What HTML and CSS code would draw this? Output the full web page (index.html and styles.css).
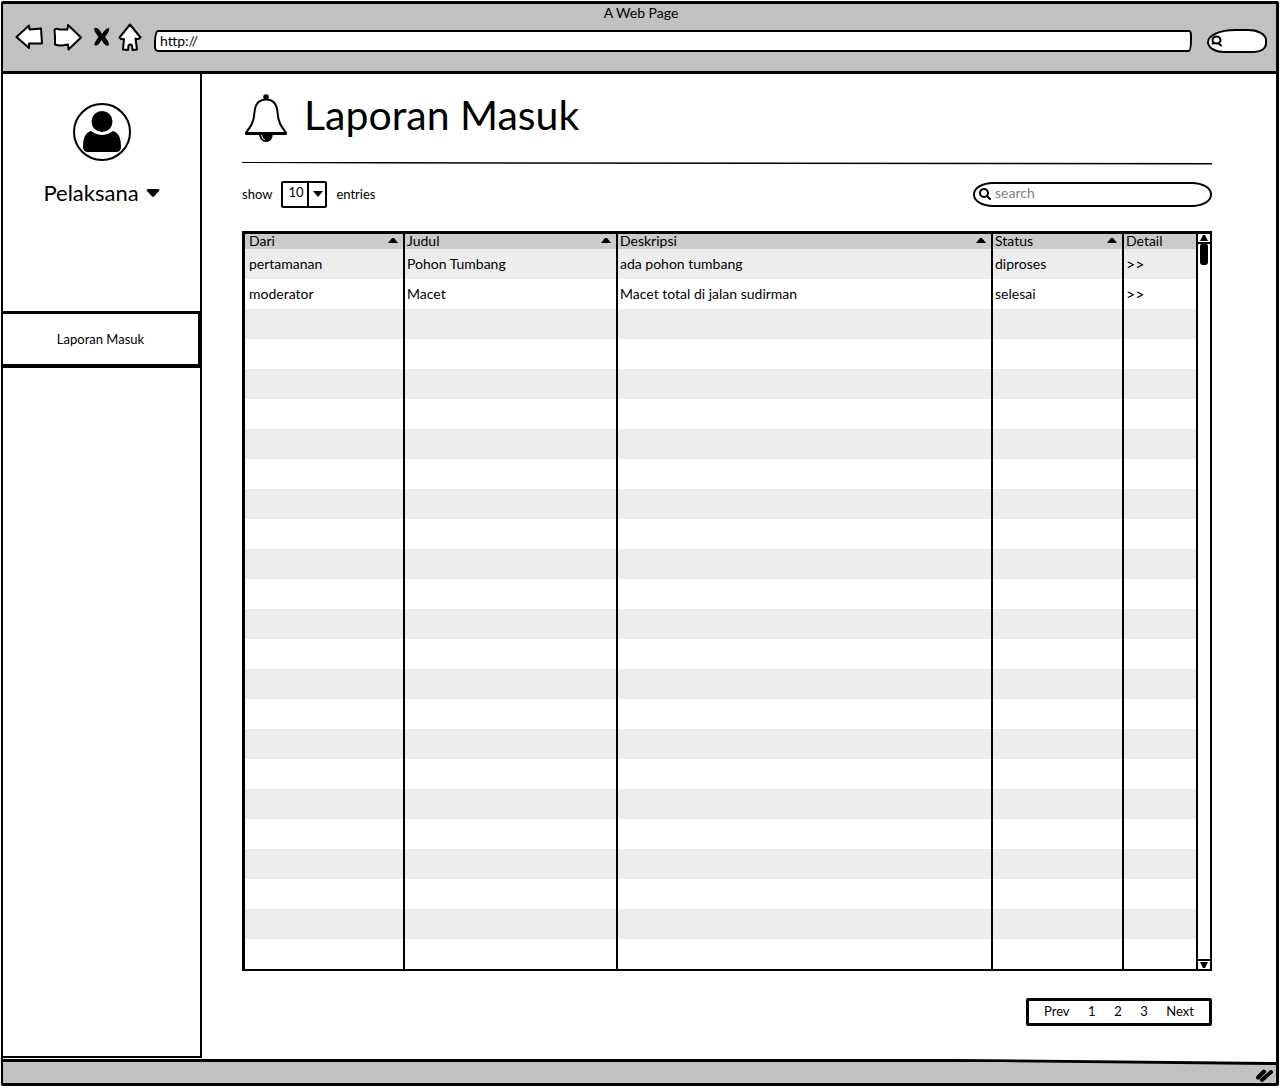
FILE: index.html
```html
<!DOCTYPE html>
<html lang="id">
<head>
<meta charset="utf-8">
<meta name="viewport" content="width=device-width, initial-scale=1">
<title>A Web Page</title>
<link rel="stylesheet" href="styles.css">
</head>
<body>
<div class="browser">
  <header class="toolbar">
    <div class="toolbar-title">A Web Page</div>
    <div class="toolbar-row">
      <div class="nav-icons">
        <button class="icon-button" type="button" aria-label="Back"><svg width="28" height="28" viewBox="0 0 28 28"><path class="outline" d="M1.500 14 L14 2.500 L14.500 6.500 L26 5.500 L27 20.500 L14 20.500 L14 25 Z"/></svg></button>
        <button class="icon-button" type="button" aria-label="Forward"><svg width="30" height="28" viewBox="0 0 30 28"><path class="outline" d="M2.500 7 Q3 5 8 6.500 L15.500 6.500 L16 2 L29 14.500 L16.500 26.500 L16 21.500 Q7 23.500 3 21.500 L3 14 Z"/></svg></button>
        <button class="icon-button icon-stop" type="button" aria-label="Stop"><svg width="18" height="20" viewBox="0 0 18 20"><path d="M1.500 1 Q5-.5 9 7 Q13 .5 16 1.200 Q17.500 3 12 10 Q17 16 15.500 18.500 Q12.500 20 8.500 13 Q5 19.500 2 18.500 Q0 17.500 5.500 10 Q0 3 1.500 1Z"/></svg></button>
        <button class="icon-button" type="button" aria-label="Home"><svg width="24" height="28" viewBox="0 0 24 28"><path class="outline" d="M12 1.500 L22.500 14.500 Q20 17 17.500 15.500 L19 26.500 L14.500 27 L14 22.500 Q12 20.500 10.500 22.500 L10 27 L5 26.500 L6 16 Q3 17 1.500 14.500 Z"/></svg></button>
      </div>
      <input class="address" type="text" value="http://" aria-label="Address">
      <div class="web-search">
        <svg class="web-search-icon" width="12" height="12" viewBox="0 0 12 12"><path class="outline" d="M1.500 8.500 L4 8 M7 8 L10 10.500"/><ellipse class="outline" cx="5.500" cy="5" rx="4" ry="3.500"/></svg>
        <input class="web-search-input" type="search" aria-label="Web search">
      </div>
    </div>
  </header>

  <div class="page">
    <nav class="sidebar">
      <div class="profile">
        <svg class="avatar" width="58" height="58" viewBox="0 0 58 58"><circle class="avatar-ring" cx="29" cy="29" r="28"/><circle cx="29" cy="18.500" r="10.500"/><path d="M18 28 Q29 36 40 28 Q48 30 48 44 Q48 49 43 49 H15 Q10 49 10 44 Q10 30 18 28Z"/></svg>
        <button class="profile-menu" type="button">Pelaksana <svg width="14" height="8" viewBox="0 0 14 8"><path d="M1.500 0 H12.500 Q14 .5 13 2 L8 7.500 Q7 8.300 6 7.500 L1 2 Q0 .5 1.500 0Z"/></svg></button>
      </div>
      <a class="sidebar-link" href="#laporan">Laporan Masuk</a>
    </nav>

    <main class="content" id="laporan">
      <div class="heading">
        <svg class="bell" width="44" height="48" viewBox="0 0 44 48"><circle cx="22" cy="3" r="2.800"/><path class="bell-body" d="M22 5.500 C13 5.500 11 12 10.500 18 C10 28 7 32 2.500 38 Q1 40 3 40 H41 Q43 40 41.500 38 C37 32 34 28 33.500 18 C33 12 31 5.500 22 5.500Z"/><path d="M1 38 H43 V40 Q42 41 41 41 H3 Q1 41 1 38Z"/><path d="M15 40 H29 Q28 48 22 48 Q16 48 15 40Z"/><path class="bell-shine" d="M17.500 41 Q18 45 21 46"/></svg>
        <h1 class="title">Laporan Masuk</h1>
      </div>
      <svg class="rule" viewBox="0 0 970 4" preserveAspectRatio="none"><path d="M0 1 L130 1 L970 2 L970 3.500 L140 2.500 L0 2Z"/></svg>

      <div class="controls">
        <div class="entries">
          <label for="count">show</label>
          <div class="select-box">
            <select class="select" id="count" aria-label="show entries"><option>10</option><option>25</option><option>50</option></select>
            <span class="select-arrow"><svg width="10" height="6" viewBox="0 0 10 6"><path d="M0 0 H10 L5 6Z"/></svg></span>
          </div>
          <span>entries</span>
        </div>
        <div class="search">
          <svg class="search-icon" width="12" height="12" viewBox="0 0 12 12"><circle class="outline" cx="5" cy="5" r="4"/><path class="outline" d="M8 8 L11 11"/></svg>
          <input class="search-input" type="search" placeholder="search" aria-label="search">
        </div>
      </div>

      <div class="grid-box">
        <table class="reports">
          <colgroup><col class="col-from"><col class="col-title"><col><col class="col-status"><col class="col-detail"></colgroup>
          <thead>
            <tr><th class="sortable">Dari</th><th class="sortable">Judul</th><th class="sortable">Deskripsi</th><th class="sortable">Status</th><th>Detail</th></tr>
          </thead>
          <tbody>
            <tr><td>pertamanan</td><td>Pohon Tumbang</td><td>ada pohon tumbang</td><td>diproses</td><td><a class="detail-link" href="#detail-1">&gt;&gt;</a></td></tr>
            <tr><td>moderator</td><td>Macet</td><td>Macet total di jalan sudirman</td><td>selesai</td><td><a class="detail-link" href="#detail-2">&gt;&gt;</a></td></tr>
            <tr><td></td><td></td><td></td><td></td><td></td></tr>
            <tr><td></td><td></td><td></td><td></td><td></td></tr>
            <tr><td></td><td></td><td></td><td></td><td></td></tr>
            <tr><td></td><td></td><td></td><td></td><td></td></tr>
            <tr><td></td><td></td><td></td><td></td><td></td></tr>
            <tr><td></td><td></td><td></td><td></td><td></td></tr>
            <tr><td></td><td></td><td></td><td></td><td></td></tr>
            <tr><td></td><td></td><td></td><td></td><td></td></tr>
            <tr><td></td><td></td><td></td><td></td><td></td></tr>
            <tr><td></td><td></td><td></td><td></td><td></td></tr>
            <tr><td></td><td></td><td></td><td></td><td></td></tr>
            <tr><td></td><td></td><td></td><td></td><td></td></tr>
            <tr><td></td><td></td><td></td><td></td><td></td></tr>
            <tr><td></td><td></td><td></td><td></td><td></td></tr>
            <tr><td></td><td></td><td></td><td></td><td></td></tr>
            <tr><td></td><td></td><td></td><td></td><td></td></tr>
            <tr><td></td><td></td><td></td><td></td><td></td></tr>
            <tr><td></td><td></td><td></td><td></td><td></td></tr>
            <tr><td></td><td></td><td></td><td></td><td></td></tr>
            <tr><td></td><td></td><td></td><td></td><td></td></tr>
            <tr><td></td><td></td><td></td><td></td><td></td></tr>
            <tr><td></td><td></td><td></td><td></td><td></td></tr>
          </tbody>
        </table>
        <div class="scrollbar">
          <button class="scroll-button scroll-up" type="button" aria-label="Scroll up"><svg width="8" height="6" viewBox="0 0 8 6"><path d="M0 6 H8 L5 0 H3Z"/></svg></button>
          <div class="scroll-thumb"></div>
          <button class="scroll-button scroll-down" type="button" aria-label="Scroll down"><svg width="8" height="6" viewBox="0 0 8 6"><path d="M0 0 H8 L5 6 H3Z"/></svg></button>
        </div>
      </div>

      <nav class="pager" aria-label="Pages">
        <a href="#prev">Prev</a><a href="#1">1</a><a href="#2">2</a><a href="#3">3</a><a href="#next">Next</a>
      </nav>
    </main>
  </div>

  <footer class="statusbar">
    <svg class="status-edge" viewBox="0 0 1273 6" preserveAspectRatio="none"><path class="status-fill" d="M0 1 H1000 L1273 4 V6 H0Z"/><path d="M0 0 H950 L1273 3 V6 L1000 3 H0Z"/></svg>
    <svg class="grip" width="18" height="15" viewBox="0 0 18 15"><path d="M2 9.500 L8 3.500 M6 12 L15 4"/></svg>
  </footer>
</div>
</body>
</html>
```
FILE: styles.css
```css
* { box-sizing: border-box; }

body {
  margin: 0;
  background: #fff;
  color: #000;
  font: 14px/16px Lato, "Open Sans", sans-serif;
}

svg { display: block; flex: none; }
a { color: inherit; text-decoration: none; }
button, input, select { font: inherit; color: inherit; }
button { padding: 0; border: 0; background: none; }
input, select { min-width: 0; outline: 0; appearance: none; }

.outline {
  fill: #fff;
  stroke: #000;
  stroke-width: 2;
  stroke-linejoin: round;
  stroke-linecap: round;
}

.browser {
  display: flex;
  flex-direction: column;
  min-height: calc(100vh - 3px);
  margin: 1px 1px 2px;
  border: 3px solid #000;
  border-left-width: 2px;
  border-radius: 2px;
}

/* Browser toolbar */
.toolbar {
  padding: 1px 9px 10px 12px;
  border-bottom: 3px solid #000;
  background: #c1c1c1;
}
.toolbar-title { text-align: center; }
.toolbar-row {
  display: flex;
  align-items: center;
  height: 40px;
}
.nav-icons {
  display: flex;
  align-items: center;
  gap: 9px;
  margin-right: 12px;
  padding-bottom: 8px;
}
.icon-stop { margin: 0 -2px 0 2px; }
.address {
  flex: 1;
  height: 22px;
  padding: 0 4px 2px;
  border: 2px solid #000;
  border-radius: 4px 3px 3px 4px / 12px 5px 12px 5px;
  background: #fff;
}
.web-search {
  display: flex;
  align-items: center;
  width: 60px;
  height: 24px;
  margin-left: 15px;
  padding-left: 2px;
  border: 2px solid #000;
  border-radius: 30px 20px 14px 18px / 14px 12px 10px 12px;
  background: #fff;
}
.web-search-input { flex: 1; width: 0; border: 0; background: none; }

/* Page */
.page { display: flex; flex: 1; }

.sidebar {
  width: 199px;
  flex: none;
  margin-bottom: 1px;
  border-right: 2px solid #000;
  border-bottom: 2px solid #000;
}
.profile {
  display: flex;
  flex-direction: column;
  align-items: center;
  height: 237px;
  padding-top: 29px;
}
.avatar-ring { fill: #fff; stroke: #000; stroke-width: 2; }
.profile-menu {
  display: flex;
  align-items: center;
  gap: 7px;
  margin-top: 20px;
  font-size: 22px;
  line-height: 24px;
}
.sidebar-link {
  display: flex;
  align-items: center;
  justify-content: center;
  height: 57px;
  border: solid #000;
  border-width: 3px 2px 4px 0;
  font-size: 13px;
}

.content {
  flex: 1;
  min-width: 0;
  padding: 20px 64px 33px 40px;
}
.heading {
  display: flex;
  align-items: center;
  gap: 16px;
  padding-left: 2px;
}
.bell-body { fill: #fff; stroke: #000; stroke-width: 2; }
.bell-shine { fill: none; stroke: #fff; stroke-width: 1; }
.title {
  height: 48px;
  margin: 0;
  font-size: 41px;
  font-weight: 400;
  line-height: 42px;
}
.rule { width: 100%; height: 4px; margin: 19px 0 15px; }

.controls {
  display: flex;
  align-items: center;
  justify-content: space-between;
  height: 28px;
  margin-bottom: 23px;
}
.entries {
  display: flex;
  align-items: center;
  gap: 9px;
  font-size: 13px;
}
.select-box { position: relative; }
.select {
  width: 46px;
  height: 27px;
  padding: 0 20px 4px 5px;
  border: 2px solid #000;
  border-radius: 2px;
  background: #fff;
}
.select-arrow {
  position: absolute;
  inset: 0 0 0 auto;
  display: grid;
  place-items: center;
  width: 20px;
  border-left: 2px solid #000;
  pointer-events: none;
}
.search {
  display: flex;
  align-items: center;
  gap: 4px;
  width: 239px;
  height: 25px;
  padding: 0 12px 0 4px;
  border: 2px solid #000;
  border-radius: 20px / 12px;
}
.search-input { flex: 1; padding: 0 0 2px; border: 0; background: none; }
.search-input::placeholder { color: #808080; opacity: 1; }

/* Reports table */
.grid-box {
  display: flex;
  border: solid #000;
  border-width: 3px 2px 2px 3px;
}
.reports {
  flex: 1;
  width: 0;
  table-layout: fixed;
  border-spacing: 0;
}
.col-from { width: 160px; }
.col-title { width: 213px; }
.col-status { width: 131px; }
.col-detail { width: 72px; }
.reports th, .reports td {
  padding: 0 2px;
  border-right: 2px solid #000;
  text-align: left;
  font-weight: 400;
  white-space: nowrap;
}
.reports th:first-child, .reports td:first-child { padding-left: 4px; }
.reports th:last-child, .reports td:last-child { border-right: 0; }
.reports th { height: 15px; padding-bottom: 2px; background: #cbcbcb; line-height: 13px; }
.reports td { height: 30px; }
.reports tbody tr:nth-child(odd) { background: #ededed; }
.detail-link { font-size: 16px; }
.sortable::after {
  content: "";
  float: right;
  width: 10px;
  height: 5px;
  margin: 4px 3px 0 0;
  background: #000;
  clip-path: polygon(40% 0, 60% 0, 100% 100%, 0 100%);
}

.scrollbar {
  display: flex;
  flex-direction: column;
  align-items: center;
  width: 14px;
  border-left: 2px solid #000;
}
.scroll-button {
  display: grid;
  place-items: center;
  width: 100%;
  height: 10px;
  border: 0 solid #000;
}
.scroll-up { border-bottom-width: 2px; }
.scroll-down { margin-top: auto; border-top-width: 2px; }
.scroll-thumb {
  width: 8px;
  height: 21px;
  border-radius: 2px 2px 3px 3px;
  background: #000;
}

.pager {
  display: flex;
  align-items: center;
  justify-content: space-between;
  width: 186px;
  height: 28px;
  margin: 27px 0 0 auto;
  padding: 0 15px 2px;
  border: 3px solid #000;
  border-radius: 2px;
  font-size: 13px;
}

/* Status bar */
.statusbar {
  display: flex;
  flex-direction: column;
  align-items: flex-end;
  background: #c1c1c1;
}
.status-edge { width: 100%; height: 6px; background: #fff; }
.status-fill { fill: #c1c1c1; }
.grip {
  margin: 3px 2px 0 0;
  fill: none;
  stroke: #000;
  stroke-width: 4;
  stroke-linecap: round;
}
```
